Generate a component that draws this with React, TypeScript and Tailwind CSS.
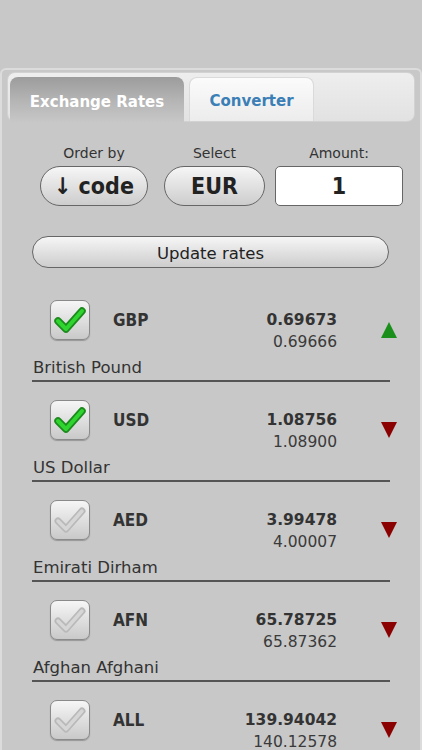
import React from "react";

type Row = { code: string; name: string; r1: string; r2: string; checked: boolean; up: boolean };

const rows: Row[] = [
  { code: "GBP", name: "British Pound", r1: "0.69673", r2: "0.69666", checked: true, up: true },
  { code: "USD", name: "US Dollar", r1: "1.08756", r2: "1.08900", checked: true, up: false },
  { code: "AED", name: "Emirati Dirham", r1: "3.99478", r2: "4.00007", checked: false, up: false },
  { code: "AFN", name: "Afghan Afghani", r1: "65.78725", r2: "65.87362", checked: false, up: false },
  { code: "ALL", name: "Albanian Lek", r1: "139.94042", r2: "140.12578", checked: false, up: false },
];

const font = { fontFamily: '"DejaVu Sans", sans-serif' };
const cond = { fontFamily: '"DejaVu Sans Condensed", "DejaVu Sans", sans-serif' };

function CheckBox({ checked }: { checked: boolean }) {
  return (
    <div className="w-[40px] h-[40px] rounded-[7px] border border-[#8a8a8a] bg-gradient-to-b from-[#f6f6f6] to-[#c9c9c9] shadow-[0_1px_1px_rgba(0,0,0,0.25)] flex items-center justify-center shrink-0">
      <svg width="36" height="36" viewBox="0 0 36 36">
        {checked ? (
          <>
            <path d="M6 19 L14 27 L30 9" fill="none" stroke="#1d8a1d" strokeWidth="7.5" strokeLinecap="round" strokeLinejoin="round" />
            <path d="M6 19 L14 27 L30 9" fill="none" stroke="#2fd42f" strokeWidth="4" strokeLinecap="round" strokeLinejoin="round" />
          </>
        ) : (
          <>
            <path d="M6 19 L14 27 L30 9" fill="none" stroke="#b9b9b9" strokeWidth="7" strokeLinecap="round" strokeLinejoin="round" />
            <path d="M6 19 L14 27 L30 9" fill="none" stroke="#d6d6d6" strokeWidth="3.5" strokeLinecap="round" strokeLinejoin="round" />
          </>
        )}
      </svg>
    </div>
  );
}

function Arrow({ up }: { up: boolean }) {
  return (
    <svg width="16" height="16" viewBox="0 0 16 16" className="shrink-0">
      {up ? <polygon points="8,0 16,16 0,16" fill="#1a8f1a" /> : <polygon points="0,0 16,0 8,16" fill="#8b0000" />}
    </svg>
  );
}

export default function App() {
  return (
    <div className="w-[422px] h-[750px] overflow-hidden bg-[#c8c8c8] text-[#333]" style={font}>
      <div className="h-[68px]" />
      <div className="rounded-t-[6px] border-x-2 border-t-2 border-[#dcdcdc] h-[682px] overflow-hidden">
        {/* Tab bar */}
        <div className="mx-[5px] mt-[2px] h-[50px] rounded-[8px] border border-[#d2d2d2] bg-gradient-to-b from-[#eeeeee] to-[#e2e2e2] flex items-end pl-[2px] gap-[5px]">
          <div className="w-[174px] h-[46px] -mb-[2px] rounded-t-[8px] bg-gradient-to-b from-[#9c9c9c] via-[#b4b4b4] to-[#c8c8c8] flex items-center justify-center pt-[4px]">
            <span className="text-white text-[15px] font-bold" style={font}>Exchange Rates</span>
          </div>
          <div className="w-[125px] h-[44px] rounded-t-[8px] border border-b-0 border-[#dadada] bg-gradient-to-b from-[#fbfbfb] to-[#ececec] flex items-center justify-center pt-[4px]">
            <span className="text-[#3b7fb6] text-[15px] font-bold" style={font}>Converter</span>
          </div>
        </div>

        {/* Controls */}
        <div className="flex items-end pl-[38px] mt-[21px]">
          <div className="w-[108px] flex flex-col items-center">
            <div className="h-[20px] leading-[20px] text-[14px] text-[#333]">Order by</div>
            <div className="mt-[3px] w-[108px] h-[40px] rounded-full border border-[#666] bg-gradient-to-b from-[#f6f6f6] to-[#cdcdcd] flex items-center justify-center text-[23px] font-bold text-[#222]" style={cond}>
              ↓ code
            </div>
          </div>
          <div className="w-[101px] ml-[16px] flex flex-col items-center">
            <div className="h-[20px] leading-[20px] text-[14px] text-[#333]">Select</div>
            <div className="mt-[3px] w-[101px] h-[40px] rounded-full border border-[#666] bg-gradient-to-b from-[#f6f6f6] to-[#cdcdcd] flex items-center justify-center text-[23px] font-bold text-[#222]" style={cond}>
              EUR
            </div>
          </div>
          <div className="w-[128px] ml-[10px] flex flex-col items-center">
            <div className="h-[20px] leading-[20px] text-[14px] text-[#333]">Amount:</div>
            <div className="mt-[3px] w-[128px] h-[40px] rounded-[5px] border border-[#666] bg-white flex items-center justify-center text-[23px] font-bold text-[#222]" style={cond}>
              1
            </div>
          </div>
        </div>

        {/* Update */}
        <div className="ml-[30px] mt-[30px] w-[357px] h-[32px] rounded-full border border-[#666] bg-gradient-to-b from-[#f6f6f6] to-[#cdcdcd] flex items-center justify-center pt-[5px] text-[16.5px] text-[#222]">
          Update rates
        </div>

        {/* List */}
        <div className="ml-[30px] w-[358px] mt-[14px]">
          {rows.map((r) => (
            <div key={r.code} className="pt-[18px]">
              <div className="flex items-start h-[56px] -mr-[7px]">
                <div className="ml-[18px]">
                  <CheckBox checked={r.checked} />
                </div>
                <div className="ml-[23px] mt-[10px] h-[20px] leading-[20px] text-[17px] font-bold text-[#333]" style={cond}>
                  {r.code}
                </div>
                <div className="flex-1" />
                <div className="mt-[9px] text-right text-[15.5px] leading-[22px]">
                  <div className="font-bold text-[#333]">{r.r1}</div>
                  <div className="text-[#3a3a3a]">{r.r2}</div>
                </div>
                <div className="ml-[44px] mt-[22px]">
                  <Arrow up={r.up} />
                </div>
              </div>
              <div className="h-[24px] leading-[24px] text-[16.5px] pl-[1px] text-[#333]">{r.name}</div>
              <div className="h-[2px] bg-[#555]" />
            </div>
          ))}
        </div>
      </div>
    </div>
  );
}
